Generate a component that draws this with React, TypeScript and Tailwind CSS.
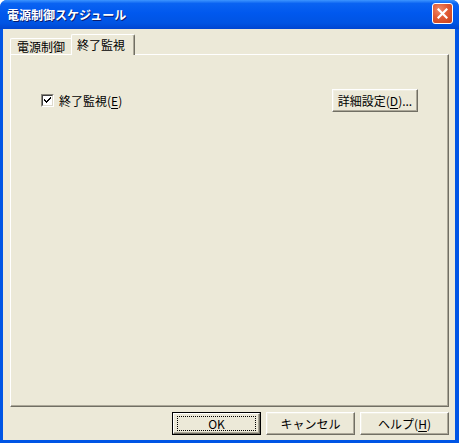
import React from "react";

const font = "font-['Noto_Sans_CJK_JP','Noto_Sans',sans-serif]";

const ClassicButton = ({
  children,
  isDefault = false,
  className = "",
}: {
  children: React.ReactNode;
  isDefault?: boolean;
  className?: string;
}) => {
  if (isDefault) {
    return (
      <div className={`h-[23px] border border-black bg-[#ece9d8] ${className}`}>
        <div className="flex h-full items-center justify-center border-t border-l border-t-white border-l-white border-r border-b border-r-[#716f64] border-b-[#716f64] shadow-[inset_-1px_-1px_0_#aca899]">
          <div className="flex h-[15px] w-[calc(100%-6px)] items-center justify-center border border-dotted border-black">
            {children}
          </div>
        </div>
      </div>
    );
  }
  return (
    <div
      className={`flex h-[23px] items-center justify-center border-t border-l border-t-white border-l-white border-r border-b border-r-[#716f64] border-b-[#716f64] bg-[#ece9d8] shadow-[inset_-1px_-1px_0_#aca899,inset_1px_1px_0_#f1efe2] ${className}`}
    >
      {children}
    </div>
  );
};

const Checkbox = () => (
  <div className="flex h-[13px] w-[13px] items-center justify-center border-t border-l border-t-[#8a877c] border-l-[#8a877c] border-r border-b border-r-white border-b-white">
    <div className="flex h-full w-full items-center justify-center border-t border-l border-t-[#404040] border-l-[#404040] border-r border-b border-r-[#dcd9cc] border-b-[#dcd9cc] bg-white">
      <svg width="7" height="7" viewBox="0 0 7 7" shapeRendering="crispEdges">
        <path d="M0 2h1v3h1v1h1V5h1V4h1V3h1V2h1V0H6v1H5v1H4v1H3v1H2V3H1V2z" fill="#000" />
        <path d="M0 2h1v1H0zM0 3h1v1H0zM1 3h1v2H1zM6 0h1v2H6z" fill="#000" />
      </svg>
    </div>
  </div>
);

const App = () => {
  return (
    <div className={`flex h-[443px] w-[459px] flex-col overflow-hidden rounded-t-[7px] bg-[#0055e5] ${font} text-[12px] leading-none text-black`}>
      {/* title bar */}
      <div className="flex h-[29px] shrink-0 items-center justify-between bg-[linear-gradient(to_bottom,#3d95ff_0%,#0a63f2_12%,#0058ee_45%,#0054e3_80%,#0045d0_100%)] pl-[7px] pr-[6px]">
        <span className="pt-[1px] text-[12px] font-bold text-white [text-shadow:1px_1px_0_#0a1c6e]">
          電源制御スケジュール
        </span>
        <div className="mb-[3px] flex h-[21px] w-[21px] items-center justify-center rounded-[3px] border border-white bg-[radial-gradient(circle_at_35%_30%,#f08a6a_0%,#e05a34_45%,#c9401c_100%)]">
          <svg width="11" height="11" viewBox="0 0 11 11">
            <path d="M1.5 1.5l8 8M9.5 1.5l-8 8" stroke="#fff" strokeWidth="2.2" strokeLinecap="square" />
          </svg>
        </div>
      </div>

      {/* body */}
      <div className="ml-[3px] mr-[4px] mb-[3px] flex flex-1 flex-col bg-[#ece9d8]">
        {/* tabs */}
        <div className="ml-[7px] mt-[5px] flex h-[20px] items-end">
          <div className="flex h-[16px] w-[62px] items-center rounded-tl-[2px] border-t border-l border-t-white border-l-white pl-[6px]">
            電源制御
          </div>
          <div className="relative z-10 -mb-[1px] -ml-[1px] flex h-[21px] w-[64px] items-start rounded-tl-[2px] rounded-tr-[2px] border-t border-l border-t-white border-l-white border-r border-r-[#716f64] bg-[#ece9d8] pl-[5px] pt-[4px] shadow-[inset_-1px_0_0_#aca899]">
            終了監視
          </div>
        </div>

        {/* panel */}
        <div className="ml-[7px] mr-[6px] h-[353px] border-t border-l border-t-white border-l-white border-r border-b border-r-[#716f64] border-b-[#716f64] shadow-[inset_-1px_-1px_0_#aca899]">
          <div className="mt-[34px] flex items-center justify-between pl-[30px] pr-[30px]">
            <div className="flex items-center gap-[5px]">
              <Checkbox />
              <span>
                終了監視(<span className="underline underline-offset-2">E</span>)
              </span>
            </div>
            <ClassicButton className="w-[86px]">
              詳細設定(<span className="underline underline-offset-2">D</span>)...
            </ClassicButton>
          </div>
        </div>

        {/* bottom buttons */}
        <div className="mt-[5px] flex justify-end gap-[5px] pr-[6px]">
          <ClassicButton isDefault className="w-[89px]">
            OK
          </ClassicButton>
          <ClassicButton className="w-[89px]">キャンセル</ClassicButton>
          <ClassicButton className="w-[89px]">
            ヘルプ(<span className="underline underline-offset-2">H</span>)
          </ClassicButton>
        </div>
      </div>
    </div>
  );
};

export default App;
